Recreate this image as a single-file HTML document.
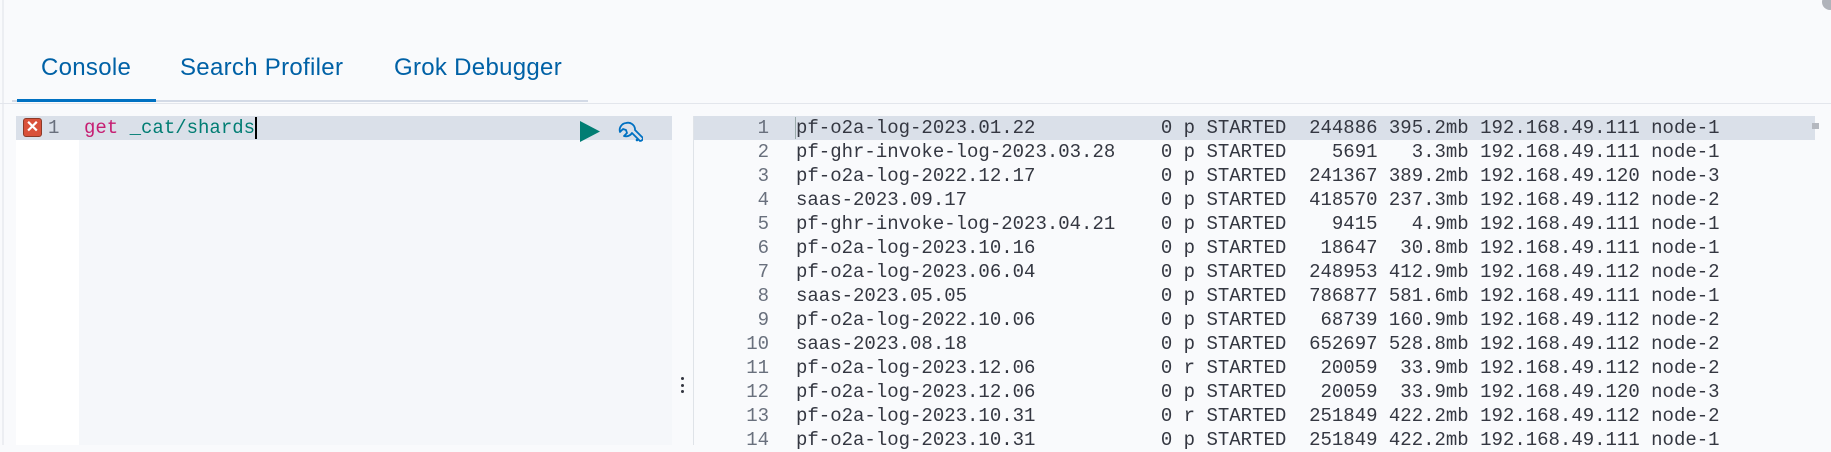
<!DOCTYPE html>
<html><head><meta charset="utf-8"><style>
*{margin:0;padding:0;box-sizing:border-box}
body{width:1831px;height:445px;background:#f9fafc;position:relative;overflow:hidden;font-family:"Liberation Sans",sans-serif}
.abs{position:absolute}
.tab{position:absolute;top:54px;font-size:24px;color:#0061a6;line-height:28px;letter-spacing:0.3px}
.mono{font-family:"Liberation Mono",monospace;font-size:19px;white-space:pre;line-height:24px}
</style></head><body>
<div class="abs" style="left:2px;top:0;width:2px;height:445px;background:#eceef2"></div>
<div class="abs" style="left:1822px;top:-6px;width:16px;height:16px;border-radius:50%;background:#b0b3ba"></div>
<div class="tab" style="left:41px">Console</div>
<div class="tab" style="left:180px">Search Profiler</div>
<div class="tab" style="left:394px">Grok Debugger</div>
<div class="abs" style="left:12px;top:100px;width:576px;height:2px;background:#d3dae6"></div>
<div class="abs" style="left:17px;top:99px;width:139px;height:3px;background:#0071c2"></div>
<div class="abs" style="left:0;top:103px;width:1831px;height:1px;background:#e3e6ec"></div>

<!-- left editor -->
<div class="abs" style="left:16px;top:116px;width:63px;height:329px;background:#fff"></div>
<div class="abs" style="left:79px;top:116px;width:593px;height:329px;background:#f5f7fa"></div>
<div class="abs" style="left:16px;top:116px;width:656px;height:24px;background:#dae0e9"></div>
<div class="abs" style="left:23px;top:118px;width:19px;height:19px;background:#d9513a;border:1px solid #8c3a28;border-radius:3px;color:#fff;font-size:16px;font-weight:bold;line-height:17px;text-align:center">✕</div>
<div class="abs mono" style="left:48px;top:116px;color:#69707d">1</div>
<div class="abs mono" style="left:84px;top:116px;color:#017d73"><span style="color:#c61e72">get</span> _cat/shards</div>
<div class="abs" style="left:255px;top:117px;width:2px;height:22px;background:#000"></div>
<svg class="abs" style="left:580px;top:121px" width="20" height="21"><path d="M0 0L20 10.5L0 21Z" fill="#017d73"/></svg>
<svg class="abs" style="left:617px;top:121px" width="26" height="26" viewBox="0 0 26 26"><path d="M9 2a7 7 0 0 0-6 9l3-3 3 1 1 3-3 3a7 7 0 0 0 8-3l8 8a3 3 0 0 0 3-3l-8-8a7 7 0 0 0-9-7z" fill="none" stroke="#0071c2" stroke-width="1.8" stroke-linejoin="round"/><circle cx="20" cy="19" r="1.3" fill="#0071c2"/></svg>
<div class="abs" style="left:681px;top:377px;width:3px;height:3px;background:#343741;border-radius:50%"></div>
<div class="abs" style="left:681px;top:384px;width:3px;height:3px;background:#343741;border-radius:50%"></div>
<div class="abs" style="left:681px;top:390px;width:3px;height:3px;background:#343741;border-radius:50%"></div>

<!-- right output -->
<div class="abs" style="left:693px;top:116px;width:1px;height:329px;background:#dfe3e8"></div>
<div class="abs" style="left:694px;top:116px;width:1121px;height:24px;background:#dae0e9"></div>
<div class="abs" style="left:795px;top:117px;width:1px;height:22px;background:#9aa"></div>
<div class="abs" style="left:1812px;top:123px;width:7px;height:6px;background:#b4b8bf"></div>
<div class="abs mono" style="left:721px;top:116px;width:48px;text-align:right;color:#69707d">1
2
3
4
5
6
7
8
9
10
11
12
13
14</div>
<div class="abs mono" style="left:796px;top:116px;color:#343741">pf-o2a-log-2023.01.22           0 p STARTED  244886 395.2mb 192.168.49.111 node-1
pf-ghr-invoke-log-2023.03.28    0 p STARTED    5691   3.3mb 192.168.49.111 node-1
pf-o2a-log-2022.12.17           0 p STARTED  241367 389.2mb 192.168.49.120 node-3
saas-2023.09.17                 0 p STARTED  418570 237.3mb 192.168.49.112 node-2
pf-ghr-invoke-log-2023.04.21    0 p STARTED    9415   4.9mb 192.168.49.111 node-1
pf-o2a-log-2023.10.16           0 p STARTED   18647  30.8mb 192.168.49.111 node-1
pf-o2a-log-2023.06.04           0 p STARTED  248953 412.9mb 192.168.49.112 node-2
saas-2023.05.05                 0 p STARTED  786877 581.6mb 192.168.49.111 node-1
pf-o2a-log-2022.10.06           0 p STARTED   68739 160.9mb 192.168.49.112 node-2
saas-2023.08.18                 0 p STARTED  652697 528.8mb 192.168.49.112 node-2
pf-o2a-log-2023.12.06           0 r STARTED   20059  33.9mb 192.168.49.112 node-2
pf-o2a-log-2023.12.06           0 p STARTED   20059  33.9mb 192.168.49.120 node-3
pf-o2a-log-2023.10.31           0 r STARTED  251849 422.2mb 192.168.49.112 node-2
pf-o2a-log-2023.10.31           0 p STARTED  251849 422.2mb 192.168.49.111 node-1</div>
</body></html>
